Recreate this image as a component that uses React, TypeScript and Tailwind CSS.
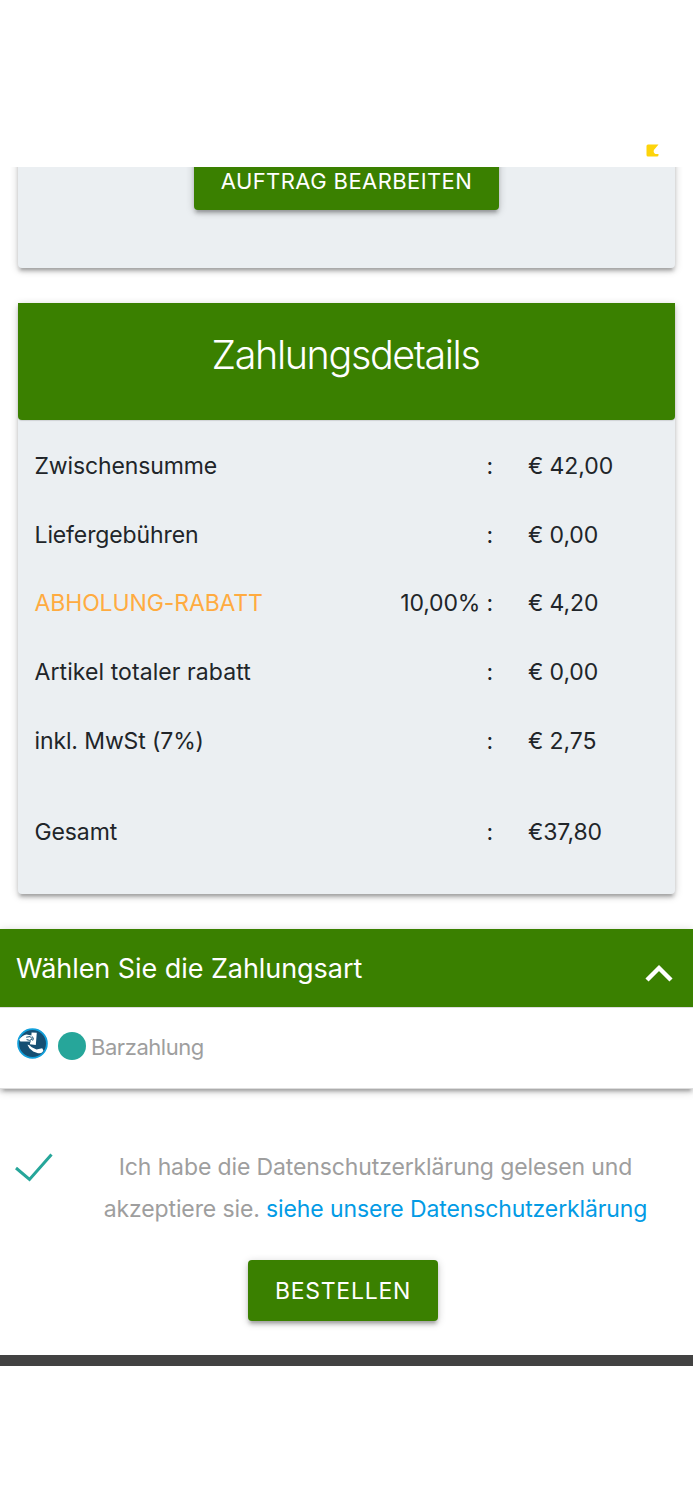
import { useState } from "react";

import clsx from "clsx";

type PaymentRow = {
  label: string;
  percent?: string;
  amount: string;
  labelClass?: string;
};

const rows: PaymentRow[] = [
  { label: "Zwischensumme", amount: "€ 42,00" },
  { label: "Liefergebühren", amount: "€ 0,00" },
  {
    label: "ABHOLUNG-RABATT",
    percent: "10,00%",
    amount: "€ 4,20",
    labelClass: "tracking-[-0.12px] text-[#ffab40]",
  },
  {
    label: "Artikel totaler rabatt",
    amount: "€ 0,00",
    labelClass: "tracking-[0.08px]",
  },
  { label: "inkl. MwSt (7%)", amount: "€ 2,75" },
];

const cardShadow =
  "shadow-[0_3.5px_3.5px_0_rgba(0,0,0,0.14),0_5px_2px_-3.5px_rgba(0,0,0,0.12),0_2px_9px_0_rgba(0,0,0,0.2)]";

function Row({ label, percent, amount, labelClass }: PaymentRow) {
  return (
    <div className="flex h-[68.6px] items-center">
      <span className={clsx("flex-1", labelClass ?? "tracking-[-0.12px]")}>
        {label}
      </span>
      <span className="w-[120px] text-right tracking-[-0.15px]">
        {percent ? `${percent} :` : ":"}
      </span>
      <span className="w-[182px] pl-[35px] tracking-[-0.1px]">{amount}</span>
    </div>
  );
}

function CashIcon() {
  return (
    <svg className="h-[31px] w-[31px]" viewBox="0 0 31 31">
      <circle cx="15.5" cy="15.5" r="14.4" fill="#164f73" />
      <circle
        cx="15.5"
        cy="15.5"
        r="14.4"
        fill="none"
        stroke="#12a0dc"
        strokeWidth="1.8"
      />
      {/* Giving hand */}
      <path
        d="M2.2 11.5C4.5 8.2 7 6.6 9.5 6.4L14.5 7.4L16.2 10.5L12.5 13.6L3.4 13.6Z"
        fill="#fff"
      />
      {/* Banknote */}
      <path d="M14.6 4.4L19.8 4.8L18.8 17L12.8 16.2L14 12Z" fill="#fff" />
      <path
        d="M9.2 9.2L13 8.6L15.4 10.8L12.8 12.4L9.6 11.6M15.2 8.4L16.4 10.6L15.6 12.6"
        fill="none"
        stroke="#164f73"
        strokeWidth="1"
      />
      {/* Receiving hand */}
      <path
        d="M10.5 16.8C12 16.6 13.5 18.2 14.8 19.3L19.5 21.6L25.2 20.2L26.4 22.4C25.6 24.6 23.6 25.4 21 25.2L16.2 23.4L12.4 20.2Z"
        fill="#fff"
      />
    </svg>
  );
}

export default function App() {
  const [isOpen, setIsOpen] = useState(true);

  return (
    <div className="flex h-[1500px] w-[693px] flex-col overflow-hidden bg-white font-['Inter','Liberation_Sans',sans-serif] text-[23px] leading-[42px] text-[#212529]">
      {/* Top bar */}
      <div className="flex h-[167px] shrink-0 items-end justify-end pr-[34px] pb-[10px]">
        <svg className="h-[13px] w-[13px]" viewBox="0 0 13 13">
          <path
            d="M2 .5H12.5L7.9 6Q7 8.7 9.4 9.9H12.5V11Q12.5 12.5 11 12.5H2Q.5 12.5 .5 11V2Q.5 .5 2 .5Z"
            fill="#fdd40b"
          />
        </svg>
      </div>

      {/* Order card, scrolled under the top bar */}
      <div className="flex h-[136px] shrink-0 flex-col justify-end overflow-hidden px-[18px] pb-[35px]">
        <div
          className={clsx(
            "flex h-[141px] shrink-0 items-end justify-center rounded-[4px] bg-[#ebeff2] pb-[58px]",
            cardShadow,
          )}
        >
          <button
            className={clsx(
              "h-[61px] w-[305px] rounded-[4px] bg-[#3a8000] pt-[3px] text-[22px] tracking-[0.42px] text-white",
              cardShadow,
            )}
          >
            AUFTRAG BEARBEITEN
          </button>
        </div>
      </div>

      {/* Payment details */}
      <section
        className={clsx(
          "mx-[18px] h-[591px] shrink-0 rounded-b-[4px] bg-[#ebeff2]",
          cardShadow,
        )}
      >
        <h2 className="h-[117px] rounded-b-[4px] bg-[#3a8000] pt-[26px] pr-[2px] text-center text-[39.5px] leading-[52px] font-light tracking-[-1.38px] text-white shadow-[0_1px_1px_rgba(0,0,0,0.12)]">
          Zahlungsdetails
        </h2>
        <div className="pt-[12px] pl-[16.5px]">
          {rows.map((row) => (
            <Row key={row.label} {...row} />
          ))}
          <div className="pt-[23px]">
            <Row label="Gesamt" amount="€37,80" />
          </div>
        </div>
      </section>

      {/* Payment method */}
      <section className={clsx("mt-[35px] shrink-0", cardShadow)}>
        <button
          onClick={() => setIsOpen((prev) => !prev)}
          className="flex h-[78px] w-full items-center justify-between bg-[#3a8000] pr-[20px] pl-[16px] text-[27px] tracking-[-0.06px] text-white"
        >
          <span className="pt-px">Wählen Sie die Zahlungsart</span>
          <svg className="mt-[10px] h-[18px] w-[28px]" viewBox="0 0 28 18">
            <path
              d="M2 16L14 4L26 16"
              fill="none"
              stroke="currentColor"
              strokeWidth="4.4"
            />
          </svg>
        </button>
        {isOpen && (
          <div className="flex h-[82px] items-center border-t border-b border-[#ddd] pl-[16.5px] text-[22px] text-[#9e9e9e]">
            <div className="mb-[9px]">
              <CashIcon />
            </div>
            <span className="mr-[5px] mb-[4px] ml-[10.5px] h-[28px] w-[28px] rounded-full bg-[#26a69a]" />
            <span className="mb-[2px] tracking-[-0.45px]">Barzahlung</span>
          </div>
        )}
      </section>

      {/* Privacy consent */}
      <div className="mt-[57px] flex shrink-0 text-[#9e9e9e]">
        <svg className="mt-[6px] ml-[14px] h-[32px] w-[40px]" viewBox="0 0 40 32">
          <path
            d="M2 16L15.5 27.5L37.5 2.5"
            fill="none"
            stroke="#26a69a"
            strokeWidth="3"
          />
        </svg>
        <p className="ml-[42px] w-[559px] text-center tracking-[-0.12px]">
          Ich habe die Datenschutzerklärung gelesen und
          <br />
          akzeptiere sie.{" "}
          <a href="#" className="text-[#039be5]">
            siehe unsere Datenschutzerklärung
          </a>
        </p>
      </div>

      <div className="mt-[30px] flex shrink-0 pl-[248px]">
        <button
          className={clsx(
            "h-[61px] w-[190px] rounded-[4px] bg-[#3a8000] text-[23px] tracking-[0.75px] text-white",
            cardShadow,
          )}
        >
          BESTELLEN
        </button>
      </div>

      <div className="mt-[34px] h-[11px] shrink-0 bg-[#424242]" />
    </div>
  );
}
